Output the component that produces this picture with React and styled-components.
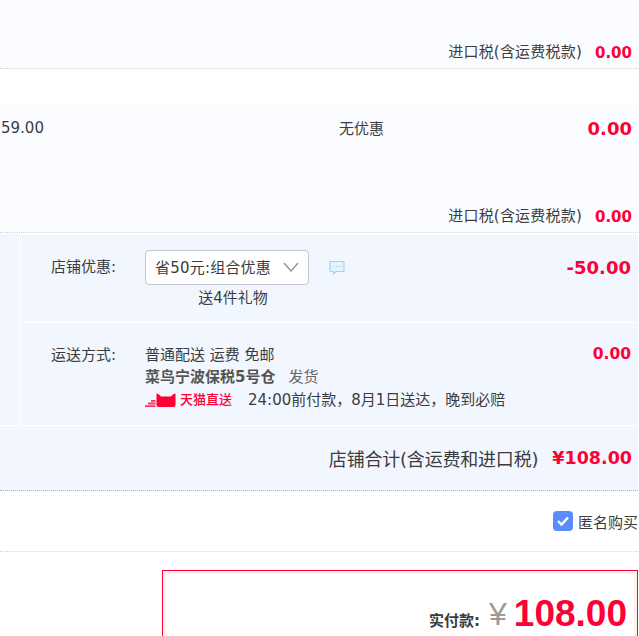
import styled, { createGlobalStyle } from "styled-components";

const Global = createGlobalStyle`
  html, body {
    margin: 0;
    padding: 0;
    background: #fff;
  }
  * {
    box-sizing: border-box;
  }
`;

const Page = styled.div`
  width: 638px;
  height: 636px;
  overflow: hidden;
  font-family: "DejaVu Sans", "Noto Sans CJK SC", sans-serif;
  font-size: 15px;
  color: #3c3c3c;
`;

const OrderBlock = styled.div`
  height: ${(p) => p.$height}px;
  margin-top: ${(p) => p.$top || 0}px;
  background: #fbfcff;
  border-bottom: 1px dotted #d4d4d4;
  display: flex;
  flex-direction: column;
`;

const ItemRow = styled.div`
  display: flex;
  align-items: center;
  height: 20px;
  margin-top: 14px;
`;

const UnitPrice = styled.span`
  width: 339px;
  padding-left: 1px;
`;

const NoDiscount = styled.span`
  flex: 1;
  margin-bottom: 2px;
`;

const ItemAmount = styled.span`
  width: 100px;
  padding-right: 6px;
  text-align: right;
  font-size: 18px;
  font-weight: 700;
  color: #ff0036;
`;

const TaxRow = styled.div`
  margin-top: auto;
  padding: 0 6px 7px 0;
  height: 24px;
  line-height: 20px;
  display: flex;
  justify-content: flex-end;
  align-items: center;
  gap: 13px;
`;

const TaxLabel = styled.span`
  letter-spacing: 0.2px;
  margin-bottom: 2px;
`;

const TaxValue = styled.span`
  font-size: 15px;
  font-weight: 700;
  color: #ff0036;
`;

const ShopPanel = styled.div`
  margin-top: 1px;
  background: #f2f7ff;
  padding-left: 19px;
  height: 191px;
`;

const ShopInner = styled.div`
  border-left: 1px solid #fff;
  border-top: 1px solid #fff;
  height: 100%;
`;

const OptionRow = styled.div`
  height: ${(p) => p.$height}px;
  display: flex;
  padding-left: 31px;
  border-bottom: ${(p) => (p.$line ? "1px solid #fff" : "none")};
`;

const OptionLabel = styled.div`
  width: 94px;
  flex: none;
  line-height: 20px;
  padding-top: ${(p) => p.$top}px;
`;

const DiscountCol = styled.div`
  width: 164px;
  padding-top: 15px;
  flex: none;
  display: flex;
  flex-direction: column;
  align-items: center;
`;

const SelectBox = styled.div`
  width: 164px;
  height: 35px;
  background: #fff;
  border: 1px solid #c4c6cf;
  border-radius: 4px;
  padding: 0 9px 2px 9px;
  display: flex;
  align-items: center;
  justify-content: space-between;
  white-space: nowrap;
  letter-spacing: 0.2px;
`;

const GiftNote = styled.div`
  margin: 3px 0 0 12px;
  line-height: 20px;
`;

const ChatIcon = styled.svg`
  margin: 25px 0 0 20px;
  flex: none;
`;

const RightAmount = styled.div`
  margin-left: auto;
  padding-right: ${(p) => p.$right}px;
  padding-top: ${(p) => p.$top}px;
  font-size: ${(p) => p.$size}px;
  line-height: 20px;
  font-weight: 700;
  color: #ff0036;
`;

const DeliveryCol = styled.div`
  padding-top: 21px;
  display: flex;
  flex-direction: column;
  line-height: 22px;
  white-space: nowrap;
`;

const WarehouseLine = styled.div`
  b {
    font-weight: 700;
    color: #555;
    margin-right: 13px;
  }
  span {
    color: #666;
  }
`;

const PromiseLine = styled.div`
  display: flex;
  align-items: center;
  margin-top: 1px;
`;

const TmallBadge = styled.span`
  display: flex;
  align-items: center;
  width: 103px;
  gap: 4px;
  color: #ff0036;
  font-size: 13px;
  font-weight: 500;
`;

const TotalBar = styled.div`
  height: 66px;
  background: #f2f7ff;
  border-top: 1px solid #fff;
  border-bottom: 1px dotted #8db4ee;
  padding: 0 6px 0 0;
  display: flex;
  justify-content: flex-end;
  align-items: center;
  gap: 14px;
`;

const TotalLabel = styled.span`
  font-size: 18px;
  letter-spacing: -0.2px;
`;

const TotalValue = styled.span`
  font-size: 17.5px;
  font-weight: 700;
  color: #ff0036;
`;

const AnonRow = styled.div`
  height: 61px;
  border-bottom: 1px dotted #d4d4d4;
  display: flex;
  align-items: center;
  padding-left: 553px;
  gap: 5px;
  white-space: nowrap;
  overflow: hidden;
`;

const CheckBox = styled.span`
  width: 20px;
  height: 20px;
  flex: none;
  border-radius: 4px;
  background: #5b8cff;
  display: flex;
  align-items: center;
  justify-content: center;
`;

const PayBox = styled.div`
  margin: 18px 0 0 162px;
  height: 90px;
  border: 1px solid #ff0036;
`;

const PayInner = styled.div`
  height: 100%;
  border: 3px solid #fff0e8;
  border-bottom: none;
  background: #fff;
  display: flex;
  align-items: flex-start;
  justify-content: flex-end;
  padding: 20px 7px 0 0;
`;

const PayLabel = styled.span`
  font-weight: 700;
  margin-top: 15px;
  margin-right: 9px;
`;

const PaySymbol = styled.span`
  font-family: "Liberation Sans", sans-serif;
  font-size: 32px;
  color: #9a9a9a;
  line-height: 40px;
  margin-right: 7px;
`;

const PayValue = styled.span`
  font-family: "Liberation Sans", sans-serif;
  font-size: 37px;
  line-height: 40px;
  font-weight: 700;
  color: #ff0036;
`;

function Tax() {
  return (
    <TaxRow>
      <TaxLabel>进口税(含运费税款)</TaxLabel>
      <TaxValue>0.00</TaxValue>
    </TaxRow>
  );
}

export default function App() {
  return (
    <Page>
      <Global />
      <OrderBlock $height={69}>
        <Tax />
      </OrderBlock>
      <OrderBlock $height={129} $top={35}>
        <ItemRow>
          <UnitPrice>59.00</UnitPrice>
          <NoDiscount>无优惠</NoDiscount>
          <ItemAmount>0.00</ItemAmount>
        </ItemRow>
        <Tax />
      </OrderBlock>
      <ShopPanel>
        <ShopInner>
          <OptionRow $height={88} $line>
            <OptionLabel $top={22}>店铺优惠:</OptionLabel>
            <DiscountCol>
              <SelectBox>
                省50元:组合优惠
                <svg width="16" height="10" viewBox="0 0 16 10" fill="none" stroke="#8a8f99" strokeWidth="1.2">
                  <path d="M1 1l7 8 7-8" />
                </svg>
              </SelectBox>
              <GiftNote>送4件礼物</GiftNote>
            </DiscountCol>
            <ChatIcon width="16" height="16" viewBox="0 0 16 16">
              <path d="M2 1.500h12a1 1 0 0 1 1 1v8a1 1 0 0 1-1 1H7l-2.500 2.500v-2.500H2a1 1 0 0 1-1-1v-8a1 1 0 0 1 1-1z" fill="#e4f3fd" stroke="#a0d3f5" strokeWidth="1.200" />
              <circle cx="5" cy="6.500" r=".8" fill="#a0d3f5" />
              <circle cx="8" cy="6.500" r=".8" fill="#a0d3f5" />
              <circle cx="11" cy="6.500" r=".8" fill="#a0d3f5" />
            </ChatIcon>
            <RightAmount $top={23} $size={18} $right={7}>-50.00</RightAmount>
          </OptionRow>
          <OptionRow $height={101}>
            <OptionLabel $top={22}>运送方式:</OptionLabel>
            <DeliveryCol>
              <div>普通配送 运费 免邮</div>
              <WarehouseLine>
                <b>菜鸟宁波保税5号仓</b>
                <span>发货</span>
              </WarehouseLine>
              <PromiseLine>
                <TmallBadge>
                  <svg width="31" height="15" viewBox="0 0 31 15" fill="#ff0036">
                    <path d="M6 7h4.500v1.800H6zM3 9.600h7.500v1.800H3zM0 12.200h10.500V14H0z" opacity=".8" />
                    <path d="M11.500.5C13 .5 15 2 16 3.500h10C27 2 29 .5 30.500.5V12a2 2 0 0 1-2 2h-15a2 2 0 0 1-2-2z" />
                  </svg>
                  天猫直送
                </TmallBadge>
                <span>24:00前付款，8月1日送达，晚到必赔</span>
              </PromiseLine>
            </DeliveryCol>
            <RightAmount $top={21} $size={15.5} $right={7}>0.00</RightAmount>
          </OptionRow>
        </ShopInner>
      </ShopPanel>
      <TotalBar>
        <TotalLabel>店铺合计(含运费和进口税)</TotalLabel>
        <TotalValue>¥108.00</TotalValue>
      </TotalBar>
      <AnonRow>
        <CheckBox>
          <svg width="12" height="10" viewBox="0 0 12 10" fill="none" stroke="#fff" strokeWidth="2.400">
            <path d="M1 5l3.500 3.500L11 1.500" />
          </svg>
        </CheckBox>
        匿名购买
      </AnonRow>
      <PayBox>
        <PayInner>
          <PayLabel>实付款:</PayLabel>
          <PaySymbol>¥</PaySymbol>
          <PayValue>108.00</PayValue>
        </PayInner>
      </PayBox>
    </Page>
  );
}
